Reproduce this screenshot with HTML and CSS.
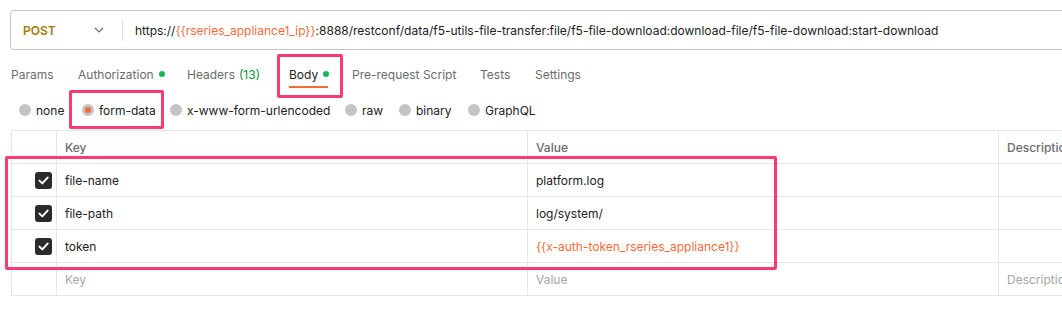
FILE: index.html
```html
<!DOCTYPE html>
<html lang="en">
<head>
    <meta charset="UTF-8">
    <title>Request</title>
    <link rel="stylesheet" href="styles.css">
</head>
<body>
    <div class="page">
        <div class="urlbar">
            <div class="method">
                <span class="method-name">POST</span>
                <svg class="chevron" width="10" height="6" viewBox="0 0 10 6"><path d="M1 1l4 4 4-4" fill="none" stroke="#6b6b6b" stroke-width="1.1"/></svg>
            </div>
            <div class="url">https://<span class="var">{{rseries_appliance1_ip}}</span>:8888/restconf/data/f5-utils-file-transfer:file/f5-file-download:download-file/f5-file-download:start-download</div>
        </div>

        <div class="tabs">
            <span class="tab t-params">Params</span>
            <span class="tab t-auth">Authorization <i class="dot"></i></span>
            <span class="tab t-headers">Headers <span class="count">(13)</span></span>
            <span class="tab t-body active">Body <i class="dot"></i></span>
            <span class="tab t-pre">Pre-request Script</span>
            <span class="tab t-tests">Tests</span>
            <span class="tab t-settings">Settings</span>
        </div>

        <div class="modes">
            <label class="mode m-none"><i class="radio"></i>none</label>
            <label class="mode m-form"><i class="radio on"></i>form-data</label>
            <label class="mode m-url"><i class="radio"></i>x-www-form-urlencoded</label>
            <label class="mode m-raw"><i class="radio"></i>raw</label>
            <label class="mode m-bin"><i class="radio"></i>binary</label>
            <label class="mode m-gql"><i class="radio"></i>GraphQL</label>
        </div>

        <div class="params">
            <div class="row head">
                <div class="cell check"></div>
                <div class="cell">Key</div>
                <div class="cell">Value</div>
                <div class="cell">Description</div>
            </div>
            <div class="row">
                <div class="cell check"><span class="box"><svg width="11" height="9" viewBox="0 0 11 9"><path d="M1.5 4.6l2.8 2.8L9.6 1.6" fill="none" stroke="#fff" stroke-width="2" stroke-linecap="round" stroke-linejoin="round"/></svg></span></div>
                <div class="cell">file-name</div>
                <div class="cell">platform.log</div>
                <div class="cell"></div>
            </div>
            <div class="row">
                <div class="cell check"><span class="box"><svg width="11" height="9" viewBox="0 0 11 9"><path d="M1.5 4.6l2.8 2.8L9.6 1.6" fill="none" stroke="#fff" stroke-width="2" stroke-linecap="round" stroke-linejoin="round"/></svg></span></div>
                <div class="cell">file-path</div>
                <div class="cell">log/system/</div>
                <div class="cell"></div>
            </div>
            <div class="row">
                <div class="cell check"><span class="box"><svg width="11" height="9" viewBox="0 0 11 9"><path d="M1.5 4.6l2.8 2.8L9.6 1.6" fill="none" stroke="#fff" stroke-width="2" stroke-linecap="round" stroke-linejoin="round"/></svg></span></div>
                <div class="cell">token</div>
                <div class="cell var">{{x-auth-token_rseries_appliance1}}</div>
                <div class="cell"></div>
            </div>
            <div class="row empty">
                <div class="cell check"></div>
                <div class="cell">Key</div>
                <div class="cell">Value</div>
                <div class="cell">Description</div>
            </div>
        </div>

        <!-- highlight boxes drawn over the screenshot -->
        <div class="mark mark-body"></div>
        <div class="mark mark-form"></div>
        <div class="mark mark-rows"></div>
    </div>
</body>
</html>
```

FILE: styles.css
```css
body {
    margin: 0;
    font-family: Inter, "Noto Sans", sans-serif;
    font-size: 12px;
    color: #212121;
    background: #fff;
    overflow: hidden;
}
.page {
    position: relative;
    width: 1062px;
    height: 311px;
    overflow: hidden;
}
.urlbar {
    display: flex;
    align-items: center;
    margin: 10px 0 0 10px;
    width: 1200px;
    height: 38px;
    border: 1px solid #c4c4c4;
    border-radius: 4px;
}
.method {
    display: flex;
    align-items: center;
    justify-content: space-between;
    width: 81px;
    height: 22px;
    padding: 0 18px 0 12px;
    border-right: 1px solid #e2e2e2;
}
.method-name {
    color: #a5790a;
    font-weight: 600;
}
.url {
    padding-left: 12px;
    white-space: nowrap;
}
.var {
    color: #f26b3a;
}
.tabs {
    display: flex;
    height: 28px;
    margin-top: 12px;
    padding-left: 11px;
}
.tab {
    position: relative;
    display: flex;
    align-items: center;
    height: 24px;
    color: #6b6b6b;
    white-space: nowrap;
}
.t-params { width: 67px; }
.t-auth { width: 109px; }
.t-headers { width: 102px; }
.t-body { width: 63px; }
.t-pre { width: 128px; }
.t-tests { width: 55px; }
.tab.active {
    color: #212121;
}
.tab.active::after {
    content: "";
    position: absolute;
    left: 0;
    bottom: -2px;
    width: 39px;
    height: 2px;
    background: #f26b3a;
}
.dot {
    display: inline-block;
    width: 6px;
    height: 6px;
    margin-left: 5px;
    border-radius: 50%;
    background: #0cbb52;
}
.count {
    color: #0a8f3c;
    margin-left: 4px;
}
.modes {
    display: flex;
    align-items: center;
    height: 30px;
    margin-top: 5px;
    padding-left: 19px;
}
.mode {
    display: flex;
    align-items: center;
    white-space: nowrap;
}
.m-none { width: 63px; }
.m-form { width: 88px; }
.m-url { width: 175px; }
.m-raw { width: 54px; }
.m-bin { width: 69px; }
.radio {
    display: inline-block;
    box-sizing: border-box;
    width: 12px;
    height: 12px;
    margin-right: 5px;
    border-radius: 50%;
    background: #c4c4c4;
}
.radio.on {
    border: 3px solid #c4c4c4;
    background: #f26b3a;
}
.params {
    margin: 5px 0 0 11px;
    width: 1200px;
    border-top: 1px solid #e6e6e6;
    border-left: 1px solid #e6e6e6;
}
.row {
    display: grid;
    grid-template-columns: 45px 471px 471px 1fr;
    height: 33px;
    border-bottom: 1px solid #e6e6e6;
    box-sizing: border-box;
}
.cell {
    display: flex;
    align-items: center;
    padding-left: 8px;
    border-right: 1px solid #e6e6e6;
    white-space: nowrap;
}
.row.head .cell {
    color: #6b6b6b;
    font-weight: 500;
    align-items: flex-end;
    padding-bottom: 8px;
}
.row.empty .cell {
    color: #a6a6a6;
}
.cell.check {
    justify-content: flex-end;
    padding: 0 4px 0 0;
}
.box {
    display: flex;
    align-items: center;
    justify-content: center;
    width: 17px;
    height: 17px;
    border-radius: 3px;
    background: #2b2b2b;
}
.mark {
    position: absolute;
    border: 3px solid #fb3a74;
    border-radius: 2px;
    box-sizing: border-box;
}
.mark-body {
    left: 277px;
    top: 54px;
    width: 66px;
    height: 44px;
}
.mark-form {
    left: 69px;
    top: 90px;
    width: 95px;
    height: 39px;
}
.mark-rows {
    left: 5px;
    top: 156px;
    width: 772px;
    height: 114px;
}
```
